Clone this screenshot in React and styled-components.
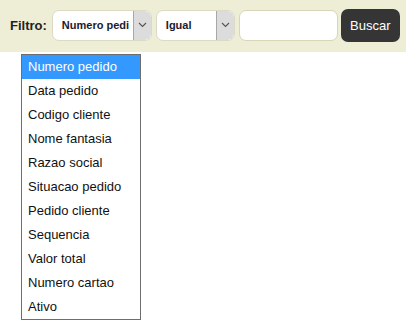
import React from 'react'
import styled, { createGlobalStyle } from 'styled-components';

const GlobalStyle = createGlobalStyle`
    body {
        margin: 0;
        background: #fff;
        font-family: "Liberation Sans", Arial, sans-serif;
    }
`

const opcoes = [
    'Numero pedido',
    'Data pedido',
    'Codigo cliente',
    'Nome fantasia',
    'Razao social',
    'Situacao pedido',
    'Pedido cliente',
    'Sequencia',
    'Valor total',
    'Numero cartao',
    'Ativo',
];

function Chevron() {
    return (
        <svg width="9" height="6" viewBox="0 0 9 6">
            <path d="M1 1 L4.5 4.5 L8 1" fill="none" stroke="#555" strokeWidth="1.1" />
        </svg>
    )
}

function App() {
    return (
        <Pagina>
            <GlobalStyle />
            <BarraFiltro>
                <Rotulo>Filtro:</Rotulo>
                <Select width={100}>
                    <SelectTexto>Numero pedi</SelectTexto>
                    <SetaBotao><Chevron /></SetaBotao>
                </Select>
                <Select width={79}>
                    <SelectTexto>Igual</SelectTexto>
                    <SetaBotao><Chevron /></SetaBotao>
                </Select>
                <Campo />
                <Botao>Buscar</Botao>
            </BarraFiltro>

            <Lista>
                {opcoes.map((op, i) => (
                    <Opcao key={op} selected={i === 0}>{op}</Opcao>
                ))}
            </Lista>
        </Pagina>
    )
}

export default App

const Pagina = styled.div`
    width: 406px;
    height: 325px;
    overflow: hidden;
`

const BarraFiltro = styled.div`
    height: 52px;
    background: #eeedd5;
    display: flex;
    align-items: center;
    padding: 0 0 2px 10px;
    box-sizing: border-box;
`

const Rotulo = styled.span`
    font-weight: bold;
    font-size: 13px;
    color: #222;
    margin-right: 5px;
`

const Select = styled.div`
    width: ${p => p.width}px;
    height: 31px;
    box-sizing: border-box;
    background: #fff;
    border: 1px solid #dcdac4;
    border-radius: 7px;
    display: flex;
    align-items: stretch;
    margin-right: 4px;
    overflow: hidden;
`

const SelectTexto = styled.span`
    flex: 1;
    display: flex;
    align-items: center;
    padding-left: 9px;
    font-size: 11px;
    font-weight: bold;
    color: #1a1a2e;
    white-space: nowrap;
    overflow: hidden;
`

const SetaBotao = styled.span`
    width: 17px;
    background: #dcdcdc;
    border-left: 1px solid #a8a8a8;
    border-radius: 0 6px 6px 0;
    display: flex;
    align-items: center;
    justify-content: center;
`

const Campo = styled.div`
    width: 99px;
    height: 31px;
    box-sizing: border-box;
    background: #fff;
    border: 1px solid #d8d5b8;
    border-radius: 7px;
    margin-right: 3px;
`

const Botao = styled.button`
    width: 59px;
    height: 33px;
    background: #353535;
    color: #fff;
    border: none;
    border-radius: 7px;
    font-family: "Liberation Sans", Arial, sans-serif;
    font-size: 13px;
    padding: 0;
`

const Lista = styled.ul`
    list-style: none;
    margin: 2px 0 0 21px;
    padding: 0;
    width: 120px;
    box-sizing: border-box;
    border: 1px solid #6e6e6e;
    background: #fff;
`

const Opcao = styled.li`
    height: 24px;
    line-height: 24px;
    padding-left: 6px;
    font-size: 13px;
    color: ${p => p.selected ? '#fff' : '#111'};
    background: ${p => p.selected ? '#3399ff' : 'transparent'};
    white-space: nowrap;
`
